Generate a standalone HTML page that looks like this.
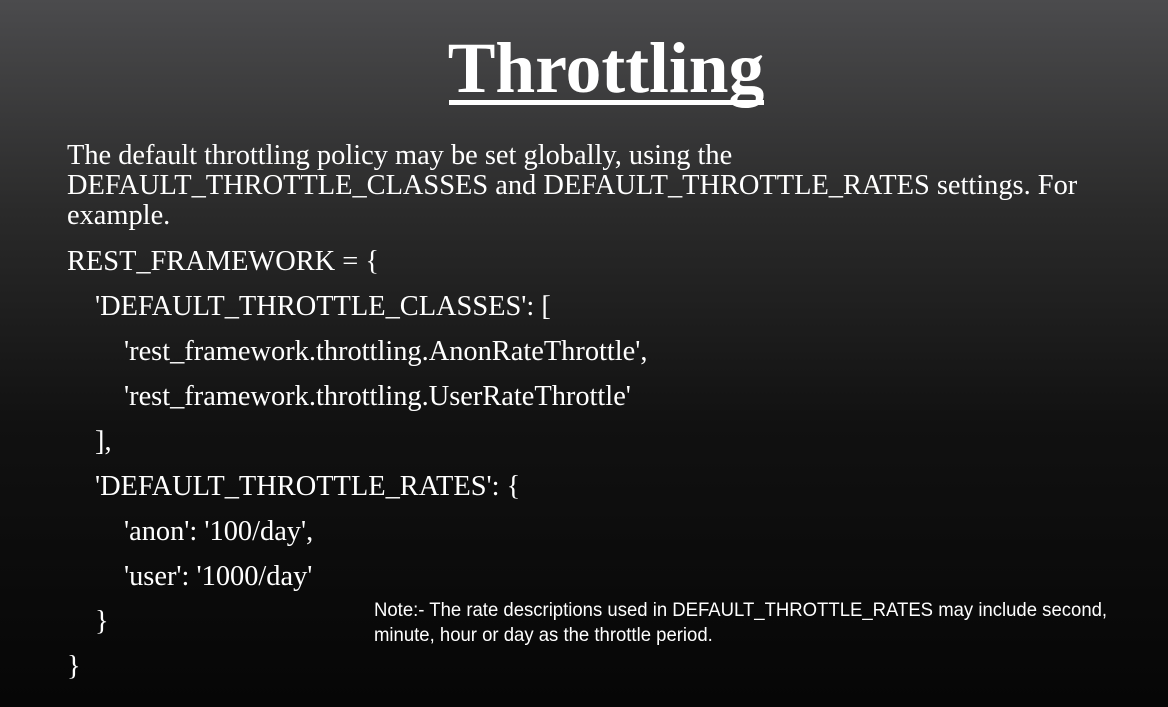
<!DOCTYPE html>
<html><head><meta charset="utf-8"><style>
html,body{margin:0;padding:0}
body{width:1168px;height:707px;overflow:hidden;position:relative;background:linear-gradient(#4b4b4d 0%,#2a2a2a 30%,#111 60%,#060606 100%);color:#fff;font-family:"Liberation Serif",serif}
.t{position:absolute;left:0;width:1212px;text-align:center;top:24px;font-size:71.5px;font-weight:bold;line-height:90px}
.ul{position:absolute;left:449px;top:100px;width:315px;height:5px;background:#fff}
.p{position:absolute;left:67px;font-size:28.4px;line-height:30px;white-space:nowrap}
.n{position:absolute;left:374px;font-family:"Liberation Sans",sans-serif;font-size:19.5px;white-space:nowrap;transform-origin:0 0;transform:scaleX(0.95)}
</style></head><body>
<div class="t">Throttling</div>
<div class="ul"></div>
<div class="p" style="top:141px">The default throttling policy may be set globally, using the</div>
<div class="p" style="top:171px">DEFAULT_THROTTLE_CLASSES and DEFAULT_THROTTLE_RATES settings. For</div>
<div class="p" style="top:201px">example.</div>
<div class="p" style="top:247px">REST_FRAMEWORK = {</div>
<div class="p" style="top:292px;left:95px">'DEFAULT_THROTTLE_CLASSES': [</div>
<div class="p" style="top:337px;left:124px">'rest_framework.throttling.AnonRateThrottle',</div>
<div class="p" style="top:382px;left:124px">'rest_framework.throttling.UserRateThrottle'</div>
<div class="p" style="top:427px;left:95px">],</div>
<div class="p" style="top:472px;left:95px">'DEFAULT_THROTTLE_RATES': {</div>
<div class="p" style="top:517px;left:124px">'anon': '100/day',</div>
<div class="p" style="top:562px;left:124px">'user': '1000/day'</div>
<div class="p" style="top:607px;left:95px">}</div>
<div class="p" style="top:652px">}</div>
<div class="n" style="top:599px">Note:- The rate descriptions used in DEFAULT_THROTTLE_RATES may include second,</div>
<div class="n" style="top:624px">minute, hour or day as the throttle period.</div>
</body></html>
